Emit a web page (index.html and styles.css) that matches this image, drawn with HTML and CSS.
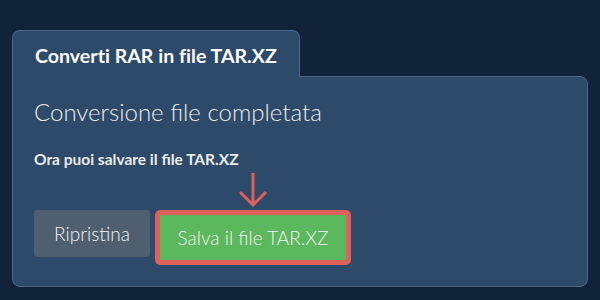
FILE: index.html
```html
<!DOCTYPE html>
<html lang="it">
<head>
  <meta charset="utf-8" />
  <title>Converti RAR in file TAR.XZ</title>
  <link rel="stylesheet" href="styles.css">
</head>
<body>
  <div class="converter">
    <div class="tab">Converti RAR in file TAR.XZ</div>
    <div class="panel">
      <h2 class="status">Conversione file completata</h2>
      <p class="hint">Ora puoi salvare il file TAR.XZ</p>
      <div class="actions">
        <button class="btn btn-reset">Ripristina</button>
        <div class="save-wrap">
          <svg class="pointer" width="30" height="36" viewBox="0 0 30 36">
            <path d="M15 1 V33 M2 20 L15 33 L28 20" fill="none" stroke="#dc605b" stroke-width="3" />
          </svg>
          <button class="btn btn-save">Salva il file TAR.XZ</button>
        </div>
      </div>
    </div>
  </div>
</body>
</html>
```

FILE: styles.css
```css
/* sfondo scuro della pagina */
body {
  margin: 0;
  padding: 30px 12px 0;
  background: #112338;
  font-family: Lato, "Liberation Sans", sans-serif;
  color: #fff;
}
.converter {
  width: 576px;
}
/* linguetta con il titolo */
.tab {
  display: inline-block;
  box-sizing: border-box;
  width: 288px;
  height: 47px;
  padding: 13px 0 0 22px;
  background: #2d4a6a;
  border: 1px solid #4b6787;
  border-bottom: none;
  border-radius: 8px 8px 0 0;
  font-size: 19.6px;
  font-weight: 700;
  font-variant-ligatures: no-common-ligatures;
  position: relative;
  z-index: 1;
  margin-bottom: -1px;
}
.panel {
  box-sizing: border-box;
  height: 211px;
  padding: 20px 21px 0;
  background: #2d4a6a;
  border: 1px solid #4b6787;
  border-radius: 0 8px 8px 8px;
}
.status {
  margin: 0;
  font-size: 24px;
  font-weight: 300;
  color: #ececec;
  line-height: 30px;
}
.hint {
  margin: 23px 0 0;
  font-size: 15.5px;
  font-weight: 700;
  color: #ececec;
}
.actions {
  display: flex;
  align-items: flex-start;
  gap: 5px;
  margin-top: 42px;
}
.btn {
  font-family: Lato, "Liberation Sans", sans-serif;
  font-size: 19px;
  font-weight: 300;
  color: #f4f4f4;
  border: none;
  cursor: pointer;
}
.btn-reset {
  width: 116px;
  height: 47px;
  background: #4f5f70;
  border-radius: 4px;
}
.save-wrap {
  position: relative;
}
/* freccia che indica il pulsante */
.pointer {
  position: absolute;
  left: 50%;
  bottom: 100%;
  margin-left: -15px;
  margin-bottom: 2px;
}
.btn-save {
  width: 196px;
  height: 55px;
  background: #5cb85c;
  border: 5px solid #dc605b;
  border-radius: 5px;
}
```
